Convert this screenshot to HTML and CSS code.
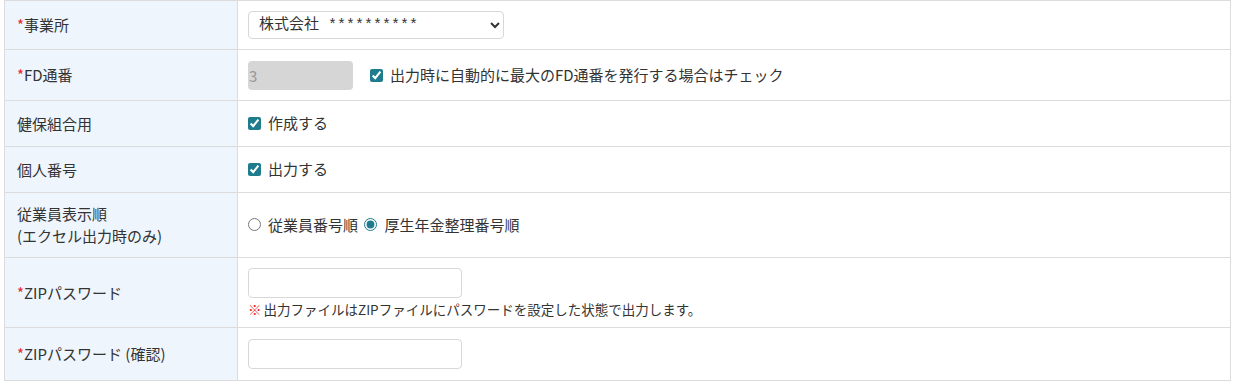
FILE: index.html
```html
<!DOCTYPE html>
<html lang="ja">
<head>
  <meta charset="UTF-8">
  <title>出力設定</title>
  <link rel="stylesheet" href="styles.css">
</head>
<body>
  <table class="form-table">
    <tr class="row-office">
      <th><span class="req">*</span>事業所</th>
      <td>
        <select class="office-select">
          <option>株式会社 **********</option>
        </select>
      </td>
    </tr>
    <tr class="row-fd">
      <th><span class="req">*</span>FD通番</th>
      <td>
        <div class="inline">
          <input type="text" class="fd-input" value="3" disabled>
          <label class="check"><input type="checkbox" checked> 出力時に自動的に最大のFD通番を発行する場合はチェック</label>
        </div>
      </td>
    </tr>
    <tr class="row-short">
      <th>健保組合用</th>
      <td><label class="check"><input type="checkbox" checked> 作成する</label></td>
    </tr>
    <tr class="row-short">
      <th>個人番号</th>
      <td><label class="check"><input type="checkbox" checked> 出力する</label></td>
    </tr>
    <tr class="row-order">
      <th>従業員表示順<br>(エクセル出力時のみ)</th>
      <td>
        <label class="check"><input type="radio" name="order"> 従業員番号順</label>
        <label class="check"><input type="radio" name="order" checked> 厚生年金整理番号順</label>
      </td>
    </tr>
    <tr class="row-zip">
      <th><span class="req">*</span>ZIPパスワード</th>
      <td>
        <input type="password" class="text-input">
        <p class="note"><span class="mark">※</span>出力ファイルはZIPファイルにパスワードを設定した状態で出力します。</p>
      </td>
    </tr>
    <tr class="row-confirm">
      <th><span class="req">*</span>ZIPパスワード (確認)</th>
      <td><input type="password" class="text-input"></td>
    </tr>
  </table>
</body>
</html>
```

FILE: styles.css
```css
body {
  margin: 0;
  padding: 0 5px 0 4px;
  font-family: "Noto Sans CJK JP", "Noto Sans", sans-serif;
  font-size: 15px;
  color: #333;
  background: #fff;
}

.form-table {
  width: 1227px;
  border-collapse: collapse;
  border: 1px solid #dcdcdc;
}

.form-table th,
.form-table td {
  border: 1px solid #dcdcdc;
  vertical-align: middle;
  padding: 0 10px;
  line-height: 22px;
}

.form-table th {
  width: 210px;
  background: #eef5fc;
  text-align: left;
  font-weight: normal;
  padding-left: 12px;
}

.row-office { height: 49px; }
.row-fd { height: 51px; }
.row-short { height: 46px; }
.row-order { height: 65px; }
.row-zip { height: 70px; }
.row-confirm { height: 53px; }

.req {
  color: #e8262d;
}

/* mono latin so the masked name spreads out like the original */
.office-select {
  width: 256px;
  height: 28px;
  border: 1px solid #d8d8d8;
  border-radius: 4px;
  background: #fff;
  font-family: "Liberation Mono", "Noto Sans CJK JP", monospace;
  font-size: 15px;
  color: #333;
  padding: 0 6px;
}

.inline {
  display: flex;
  align-items: center;
  gap: 17px;
}

.fd-input {
  width: 105px;
  height: 29px;
  box-sizing: border-box;
  border: none;
  border-radius: 4px;
  background: #d6d6d6;
  color: #999;
  font-family: inherit;
  font-size: 15px;
  padding: 0 0 0 1px;
}

.check {
  display: inline-flex;
  align-items: center;
  gap: 7px;
}

.check input {
  margin: 0;
  width: 13px;
  height: 13px;
  accent-color: #1f7c8d;
}

.check + .check {
  margin-left: 3px;
}

.text-input {
  display: block;
  width: 214px;
  height: 30px;
  box-sizing: border-box;
  border: 1px solid #d8d8d8;
  border-radius: 4px;
  background: #fff;
}

.note {
  margin: 3px 0 0;
  font-size: 13.5px;
  line-height: 17px;
}

.mark {
  color: #e8262d;
  margin-right: 2px;
}
```
